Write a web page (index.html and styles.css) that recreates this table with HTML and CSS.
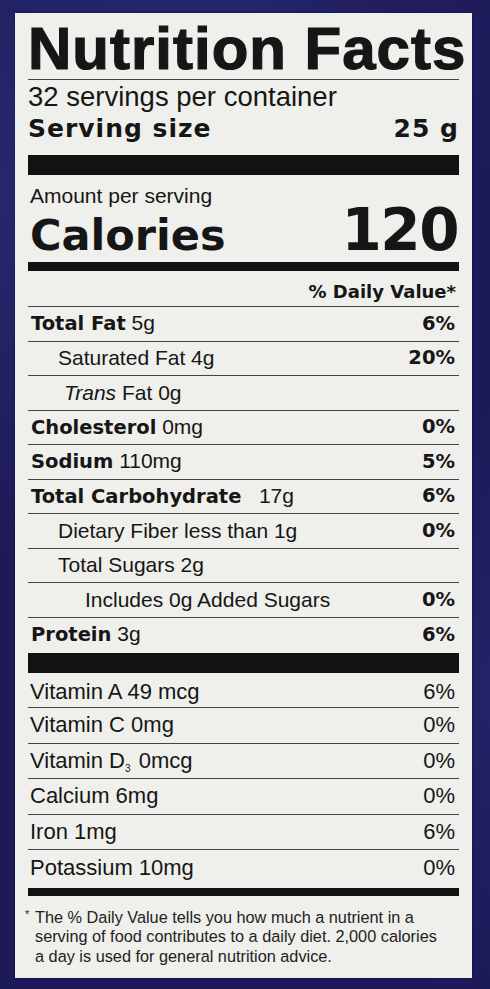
FILE: index.html
```html
<!DOCTYPE html>
<html lang="en">
<head>
  <meta charset="UTF-8">
  <title>Nutrition Facts</title>
  <link rel="stylesheet" href="styles.css">
</head>
<body>

  <div class="label">
    <div class="title">Nutrition Facts</div>
    <div class="servings">32 servings per container</div>
    <div class="size">
      <span>Serving size</span>
      <span>25 g</span>
    </div>

    <div class="bar thick"></div>

    <div class="amount">Amount per serving</div>
    <div class="calories">
      <span class="cal-label">Calories</span>
      <span class="cal-value">120</span>
    </div>

    <div class="bar mid"></div>

    <div class="dv-head">% Daily Value*</div>

    <div class="row"><span><b>Total Fat</b> 5g</span><b>6%</b></div>
    <div class="row ind1"><span>Saturated Fat 4g</span><b>20%</b></div>
    <div class="row ind1 trans"><span><i>Trans</i> Fat 0g</span></div>
    <div class="row"><span><b>Cholesterol</b> 0mg</span><b>0%</b></div>
    <div class="row"><span><b>Sodium</b> 110mg</span><b>5%</b></div>
    <div class="row"><span><b>Total Carbohydrate</b> &nbsp; 17g</span><b>6%</b></div>
    <div class="row ind1"><span>Dietary Fiber less than 1g</span><b>0%</b></div>
    <div class="row ind1"><span>Total Sugars 2g</span></div>
    <div class="row ind2"><span>Includes 0g Added Sugars</span><b>0%</b></div>
    <div class="row last"><span><b>Protein</b> 3g</span><b>6%</b></div>

    <div class="bar thick vit-top"></div>

    <div class="vrow first"><span>Vitamin A 49 mcg</span><span>6%</span></div>
    <div class="vrow"><span>Vitamin C 0mg</span><span>0%</span></div>
    <div class="vrow"><span>Vitamin D<sub class="sub">3</sub> 0mcg</span><span>0%</span></div>
    <div class="vrow"><span>Calcium 6mg</span><span>0%</span></div>
    <div class="vrow"><span>Iron 1mg</span><span>6%</span></div>
    <div class="vrow last"><span>Potassium 10mg</span><span>0%</span></div>

    <div class="bar mid foot-top"></div>

    <div class="foot">
      <span class="star">*</span>The % Daily Value tells you how much a nutrient in a<br>
      serving of food contributes to a daily diet. 2,000 calories<br>
      a day is used for general nutrition advice.
    </div>
  </div>

</body>
</html>
```

FILE: styles.css
```css
* {
  box-sizing: border-box;
}

body {
  margin: 0;
  height: 989px;
  overflow: hidden;
  font-family: "Liberation Sans", Arial, sans-serif;
  color: #161616;
  background-color: #1c1a58;
  background-image:
    radial-gradient(circle at 8% 20%, rgba(70, 70, 160, 0.3), transparent 40%),
    radial-gradient(circle at 95% 70%, rgba(60, 60, 150, 0.25), transparent 35%),
    radial-gradient(circle at 50% 0%, rgba(60, 60, 150, 0.25), transparent 30%);
}

.label {
  width: 457px;
  margin: 13px 0 0 15px;
  padding: 6px 13px 12px 13px;
  background-color: #efefeb;
  box-shadow: 0 0 2px rgba(0, 0, 0, 0.5);
}

.title {
  font-size: 60px;
  line-height: 60px;
  font-weight: bold;
  letter-spacing: 1px;
  white-space: nowrap;
  -webkit-text-stroke: 1.2px #161616;
  border-bottom: 1px solid #444;
}

.servings {
  margin-top: 2px;
  font-size: 27.5px;
  line-height: 30px;
  white-space: nowrap;
}

.size {
  display: flex;
  justify-content: space-between;
  margin-top: 3px;
  font-family: "DejaVu Sans", sans-serif;
  font-weight: bold;
  font-size: 25px;
  line-height: 28px;
  letter-spacing: 1px;
}

.bar {
  background-color: #121212;
}

.bar.thick {
  height: 20px;
  margin-top: 12px;
}

.bar.mid {
  height: 9px;
  margin-top: 5.5px;
}

.amount {
  margin-top: 8.5px;
  font-size: 21px;
  line-height: 24px;
  padding-left: 2px;
}

.calories {
  display: flex;
  justify-content: space-between;
  align-items: baseline;
  height: 49px;
  font-family: "DejaVu Sans", sans-serif;
  font-weight: bold;
  line-height: 44px;
  padding-right: 1px;
}

.cal-label {
  font-size: 43px;
  padding-left: 2px;
}

.cal-value {
  font-size: 58px;
  letter-spacing: -1.5px;
}

.dv-head {
  text-align: right;
  padding: 10px 3px 3px 0;
  font-family: "DejaVu Sans", sans-serif;
  font-weight: bold;
  font-size: 18px;
  line-height: 22px;
  border-bottom: 1px solid #444;
}

.row {
  display: flex;
  justify-content: space-between;
  align-items: center;
  height: 34.5px;
  padding: 0 4px 0 3px;
  font-size: 21px;
  line-height: 24px;
  white-space: nowrap;
  border-bottom: 1px solid #444;
}

.row b {
  font-family: "DejaVu Sans", sans-serif;
  font-weight: bold;
  font-size: 19.5px;
}

.row.ind1 {
  padding-left: 30px;
}

.row.ind2 {
  padding-left: 57px;
}

.row.trans {
  padding-left: 36px;
}

.row.last {
  height: 34px;
  border-bottom: none;
}

.bar.thick.vit-top {
  margin-top: 1px;
}

.vrow {
  display: flex;
  justify-content: space-between;
  align-items: center;
  height: 35.5px;
  padding: 0 4px 0 2px;
  font-size: 22px;
  line-height: 24px;
  white-space: nowrap;
  border-bottom: 1px solid #444;
}

.vrow.first {
  padding-top: 4px;
}

.vrow.last {
  border-bottom: none;
}

.sub {
  font-size: 10px;
  line-height: 0;
  vertical-align: -4px;
  margin-right: 2px;
}

.bar.mid.foot-top {
  height: 8px;
  margin-top: 2px;
}

.foot {
  padding: 12px 0 0 7px;
  font-size: 16.3px;
  line-height: 19.5px;
  white-space: nowrap;
  color: #222;
}

.star {
  display: inline-block;
  width: 10px;
  margin-left: -10px;
  font-size: 11px;
  line-height: 0;
  vertical-align: 5px;
}
```
